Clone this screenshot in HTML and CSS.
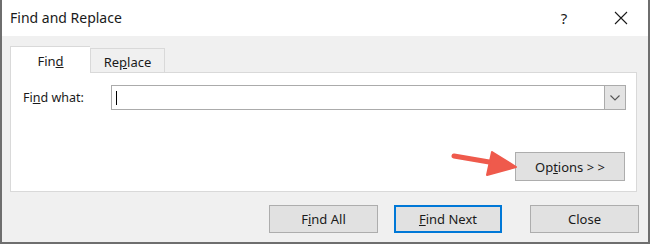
FILE: index.html
```html
<!DOCTYPE html>
<html>
<head>
<meta charset="utf-8">
<link rel="stylesheet" href="styles.css">
</head>
<body>
<div class="window">
  <div class="titlebar">
    <div class="title">Find and Replace</div>
    <div class="tb-buttons">
      <span class="help">?</span>
      <svg class="close-x" width="14" height="14" viewBox="0 0 14 14"><path d="M1 1 L13 13 M13 1 L1 13" stroke="#1a1a1a" stroke-width="1.1" fill="none"/></svg>
    </div>
  </div>
  <div class="content">
    <div class="tabs">
      <div class="tab active">Fin<u>d</u></div>
      <div class="tab">Re<u>p</u>lace</div>
    </div>
    <div class="panel">
      <div class="row">
        <label class="label">Fi<u>n</u>d what:</label>
        <div class="combo">
          <div class="combo-input"><span class="caret"></span></div>
          <div class="combo-btn">
            <svg width="10" height="6" viewBox="0 0 10 6"><path d="M0.5 0.5 L5 5 L9.5 0.5" stroke="#555" stroke-width="1.1" fill="none"/></svg>
          </div>
        </div>
      </div>
      <div class="opt-row">
        <button class="btn opt">Op<u>t</u>ions &gt; &gt;</button>
      </div>
    </div>
    <div class="actions">
      <button class="btn">F<u>i</u>nd All</button>
      <button class="btn default"><u>F</u>ind Next</button>
      <button class="btn close">Close</button>
    </div>
  </div>
  <svg class="arrow" width="70" height="30" viewBox="0 0 70 30">
    <path d="M3 6 L44 13" stroke="#ef5a4c" stroke-width="5" stroke-linecap="round" fill="none"/>
    <path d="M41 2 L65 17 L36 25 Z" fill="#ef5a4c" stroke="#ef5a4c" stroke-width="2" stroke-linejoin="round"/>
  </svg>
</div>
</body>
</html>
```
FILE: styles.css
```css
* { box-sizing: border-box; }
html, body { margin: 0; padding: 0; }
body {
  font-family: "Noto Sans", "Open Sans", sans-serif;
  color: #1a1a1a;
  background: #f0f0f0;
}
.window {
  position: relative;
  width: 650px;
  height: 244px;
  background: #f0f0f0;
  border-left: 2px solid #6e6e6e;
  border-right: 2px solid #6e6e6e;
  border-bottom: 2px solid #6e6e6e;
  overflow: hidden;
}
.titlebar {
  height: 36px;
  background: #ffffff;
  display: flex;
  align-items: center;
  justify-content: space-between;
  padding-left: 8px;
}
.title {
  font-size: 14px;
  margin-top: -1px;
}
.tb-buttons {
  display: flex;
  align-items: center;
  height: 100%;
}
.help {
  font-size: 15px;
  width: 40px;
  text-align: center;
  margin-right: 30px;
}
.close-x {
  margin-right: 20px;
}
.content {
  padding: 10px 11px 0 8px;
}
.tabs {
  display: flex;
  align-items: flex-end;
  height: 26px;
  position: relative;
  z-index: 1;
}
.tab {
  font-size: 13px;
  height: 24px;
  width: 75px;
  border: 1px solid #d9d9d9;
  border-bottom: none;
  background: #f0f0f0;
  display: flex;
  align-items: center;
  justify-content: center;
  padding-top: 2px;
}
.tab.active {
  width: 80px;
  height: 27px;
  margin-bottom: -1px;
  background: #ffffff;
  border-right: none;
}
.panel {
  height: 120px;
  background: #ffffff;
  border: 1px solid #d9d9d9;
  padding: 12px 10px 0 12px;
}
.row {
  display: flex;
  align-items: center;
}
.label {
  font-size: 12.5px;
  width: 88px;
}
.combo {
  flex: 1;
  display: flex;
  height: 25px;
  border: 1px solid #ababab;
  background: #fff;
}
.combo-input {
  flex: 1;
  display: flex;
  align-items: center;
  padding-left: 4px;
}
.caret {
  width: 1px;
  height: 14px;
  background: #000;
}
.combo-btn {
  width: 21px;
  background: #e3e3e3;
  border-left: 1px solid #ababab;
  display: flex;
  align-items: center;
  justify-content: center;
}
.opt-row {
  display: flex;
  justify-content: flex-end;
  margin-top: 42px;
}
.btn {
  font-family: "Noto Sans", "Open Sans", sans-serif;
  font-size: 13px;
  color: #1a1a1a;
  width: 109px;
  height: 28px;
  background: #e1e1e1;
  border: 1px solid #adadad;
  padding: 0;
  margin: 0;
}
.btn.opt {
  width: 110px;
  height: 29px;
  margin-right: 1px;
}
.btn.default {
  border: 2px solid #0078d7;
  width: 108px;
}
.actions {
  display: flex;
  justify-content: flex-end;
  margin-top: 13px;
}
.actions .btn { margin-left: 16px; }
.actions .btn.close { margin-left: 28px; margin-right: -2px; }
.arrow {
  position: absolute;
  left: 449px;
  top: 150px;
}
```
